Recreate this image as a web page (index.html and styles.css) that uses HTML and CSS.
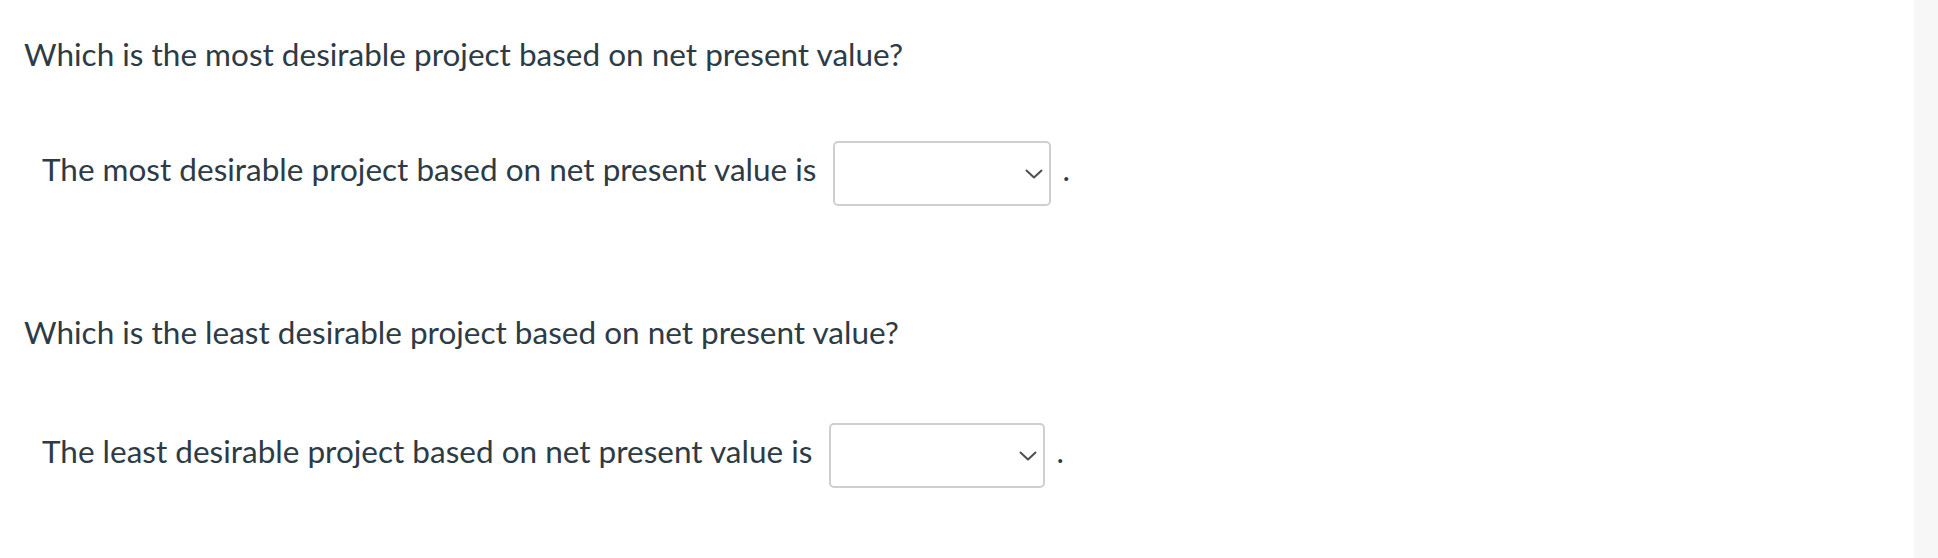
FILE: index.html
```html
<!DOCTYPE html>
<html lang="en">
<head>
<meta charset="utf-8">
<title>Net present value</title>
<link rel="stylesheet" href="styles.css">
</head>
<body>
<div class="page">
  <main class="content">
    <p class="question q1">Which is the most desirable project based on net present value?</p>
    <div class="answer a1">
      <span class="answer-text">The most desirable project based on net present value is</span>
      <span class="select-wrap w1">
        <select class="select" aria-label="most desirable project"><option value=""></option></select>
        <svg class="chevron" width="18" height="10" viewBox="0 0 18 10"><path d="M1.5 1.5 L9 8.5 L16.5 1.5" fill="none" stroke="#4a4f54" stroke-width="2" stroke-linecap="round" stroke-linejoin="round"/></svg>
      </span>
      <span class="period">.</span>
    </div>
    <p class="question q2">Which is the least desirable project based on net present value?</p>
    <div class="answer a2">
      <span class="answer-text">The least desirable project based on net present value is</span>
      <span class="select-wrap w2">
        <select class="select" aria-label="least desirable project"><option value=""></option></select>
        <svg class="chevron" width="18" height="10" viewBox="0 0 18 10"><path d="M1.5 1.5 L9 8.5 L16.5 1.5" fill="none" stroke="#4a4f54" stroke-width="2" stroke-linecap="round" stroke-linejoin="round"/></svg>
      </span>
      <span class="period">.</span>
    </div>
  </main>
  <aside class="side"></aside>
</div>
</body>
</html>
```
FILE: styles.css
```css
html, body {
  margin: 0;
  padding: 0;
  height: 100%;
}
body {
  font-family: Lato, "Open Sans", sans-serif;
  color: #2d3b45;
  background: #ffffff;
}
.page {
  display: flex;
  min-height: 558px;
}
.content {
  flex: 1;
  padding-top: 32px;
}
.side {
  width: 24px;
  background: #f7f7f7;
}
.question {
  margin: 0;
  padding-left: 24px;
  font-size: 31.5px;
  line-height: 45px;
}
.answer {
  display: flex;
  align-items: center;
  padding-left: 42px;
  font-size: 31.5px;
  line-height: 45px;
}
.a1 { margin-top: 64px; }
.q2 { margin-top: 104px; }
.a2 { margin-top: 68px; }
.answer-text,
.period {
  white-space: nowrap;
  padding-bottom: 9px;
}
.select-wrap {
  position: relative;
  display: inline-flex;
  margin-left: 17px;
}
.w1 { width: 218px; }
.w2 { width: 216px; }
.select {
  -webkit-appearance: none;
  appearance: none;
  width: 100%;
  height: 65px;
  box-sizing: border-box;
  border: 2px solid #cfcfcf;
  border-radius: 5px;
  background: #ffffff;
  font: inherit;
  color: inherit;
}
.chevron {
  position: absolute;
  right: 8px;
  top: 28px;
  pointer-events: none;
}
.period {
  margin-left: 11px;
}
```
